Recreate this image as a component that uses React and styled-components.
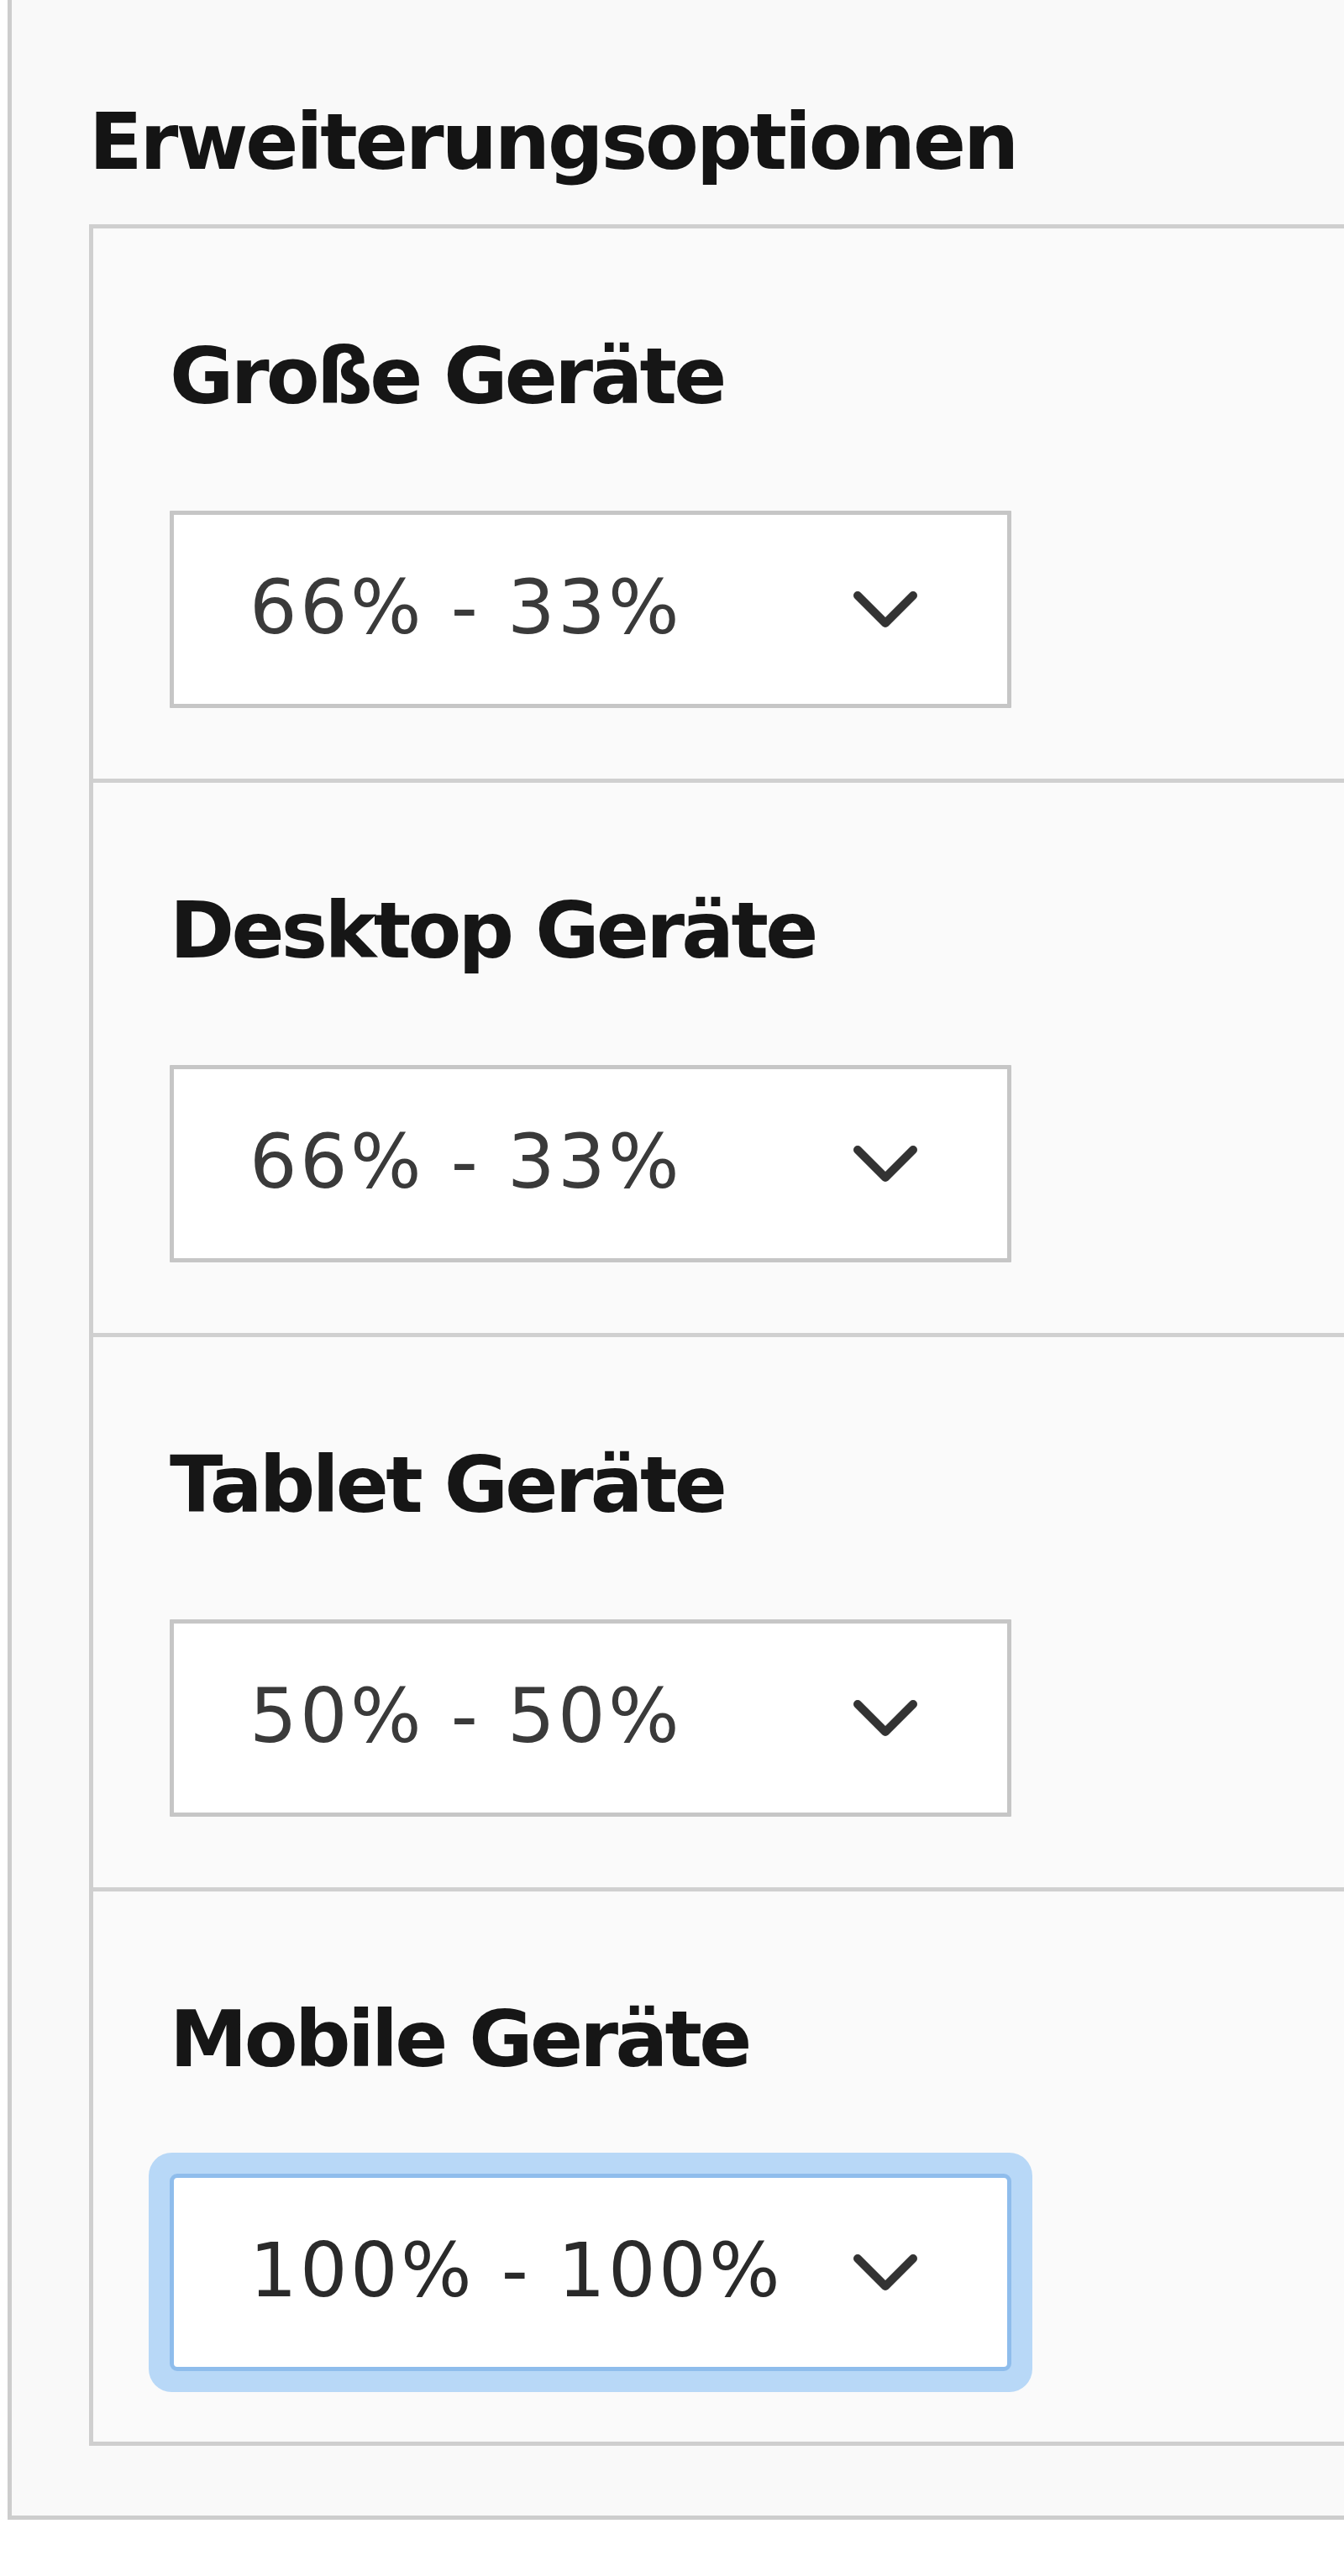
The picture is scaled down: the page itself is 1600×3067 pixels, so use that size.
import React from "react";
import styled, { createGlobalStyle } from "styled-components";

const GlobalStyle = createGlobalStyle`
  html, body {
    margin: 0;
    padding: 0;
    background: #ffffff;
    font-family: "DejaVu Sans", Verdana, sans-serif;
  }
`;

const Panel = styled.div`
  margin-left: 9px;
  border-left: 5px solid #cdcdcd;
  border-bottom: 5px solid #cdcdcd;
  background: #f9f9f9;
  padding: 115px 0 83px 92px;
`;

const Heading = styled.h2`
  margin: 0 0 44px 0;
  font-family: "DejaVu Sans", Verdana, sans-serif;
  font-weight: 700;
  font-size: 93px;
  line-height: normal;
  letter-spacing: -3px;
  color: #141414;
  white-space: nowrap;
`;

const Group = styled.div`
  border: 5px solid #cfcfcf;
  border-right: none;
  background: #fafafa;
`;

const Row = styled.div`
  padding: 122px 0 84px 91px;
  & + & {
    border-top: 5px solid #d0d0d0;
  }
`;

const Label = styled.label`
  display: block;
  margin: 0 0 106px 0;
  font-family: "DejaVu Sans", Verdana, sans-serif;
  font-weight: 700;
  font-size: 93px;
  line-height: normal;
  letter-spacing: -3.7px;
  color: #161616;
  white-space: nowrap;
`;

const SelectBox = styled.div`
  box-sizing: border-box;
  width: 1002px;
  height: 235px;
  display: flex;
  align-items: center;
  justify-content: space-between;
  padding: 0 106px 0 90px;
  background: #ffffff;
  border: 5px solid ${(p) => (p.$focused ? "#8fbdec" : "#c6c6c6")};
  border-radius: ${(p) => (p.$focused ? "9px" : "1px")};
  box-shadow: ${(p) => (p.$focused ? "0 0 0 25px #b8d8f7" : "none")};
  font-family: "DejaVu Sans", Verdana, sans-serif;
  font-weight: 400;
  font-size: 89px;
  letter-spacing: 3.4px;
  color: ${(p) => (p.$focused ? "#2a2a2a" : "#3a3a3a")};
  white-space: nowrap;
`;

const Value = styled.span`
  display: block;
  margin-top: -6px;
`;

const Chevron = styled.svg`
  flex: none;
  display: block;
`;

function ChevronIcon() {
  return (
    <Chevron width="78" height="46" viewBox="0 0 78 46" aria-hidden="true">
      <polyline
        points="6,6 39,39 72,6"
        fill="none"
        stroke="#333333"
        strokeWidth="10"
        strokeLinecap="round"
        strokeLinejoin="round"
      />
    </Chevron>
  );
}

const fields = [
  { label: "Große Geräte", value: "66% - 33%" },
  { label: "Desktop Geräte", value: "66% - 33%" },
  { label: "Tablet Geräte", value: "50% - 50%" },
  { label: "Mobile Geräte", value: "100% - 100%", focused: true },
];

export default function App() {
  return (
    <>
      <GlobalStyle />
      <Panel>
        <Heading>Erweiterungsoptionen</Heading>
        <Group>
          {fields.map((f) => (
            <Row key={f.label}>
              <Label>{f.label}</Label>
              <SelectBox $focused={f.focused} role="combobox" tabIndex={0}>
                <Value>{f.value}</Value>
                <ChevronIcon />
              </SelectBox>
            </Row>
          ))}
        </Group>
      </Panel>
    </>
  );
}
